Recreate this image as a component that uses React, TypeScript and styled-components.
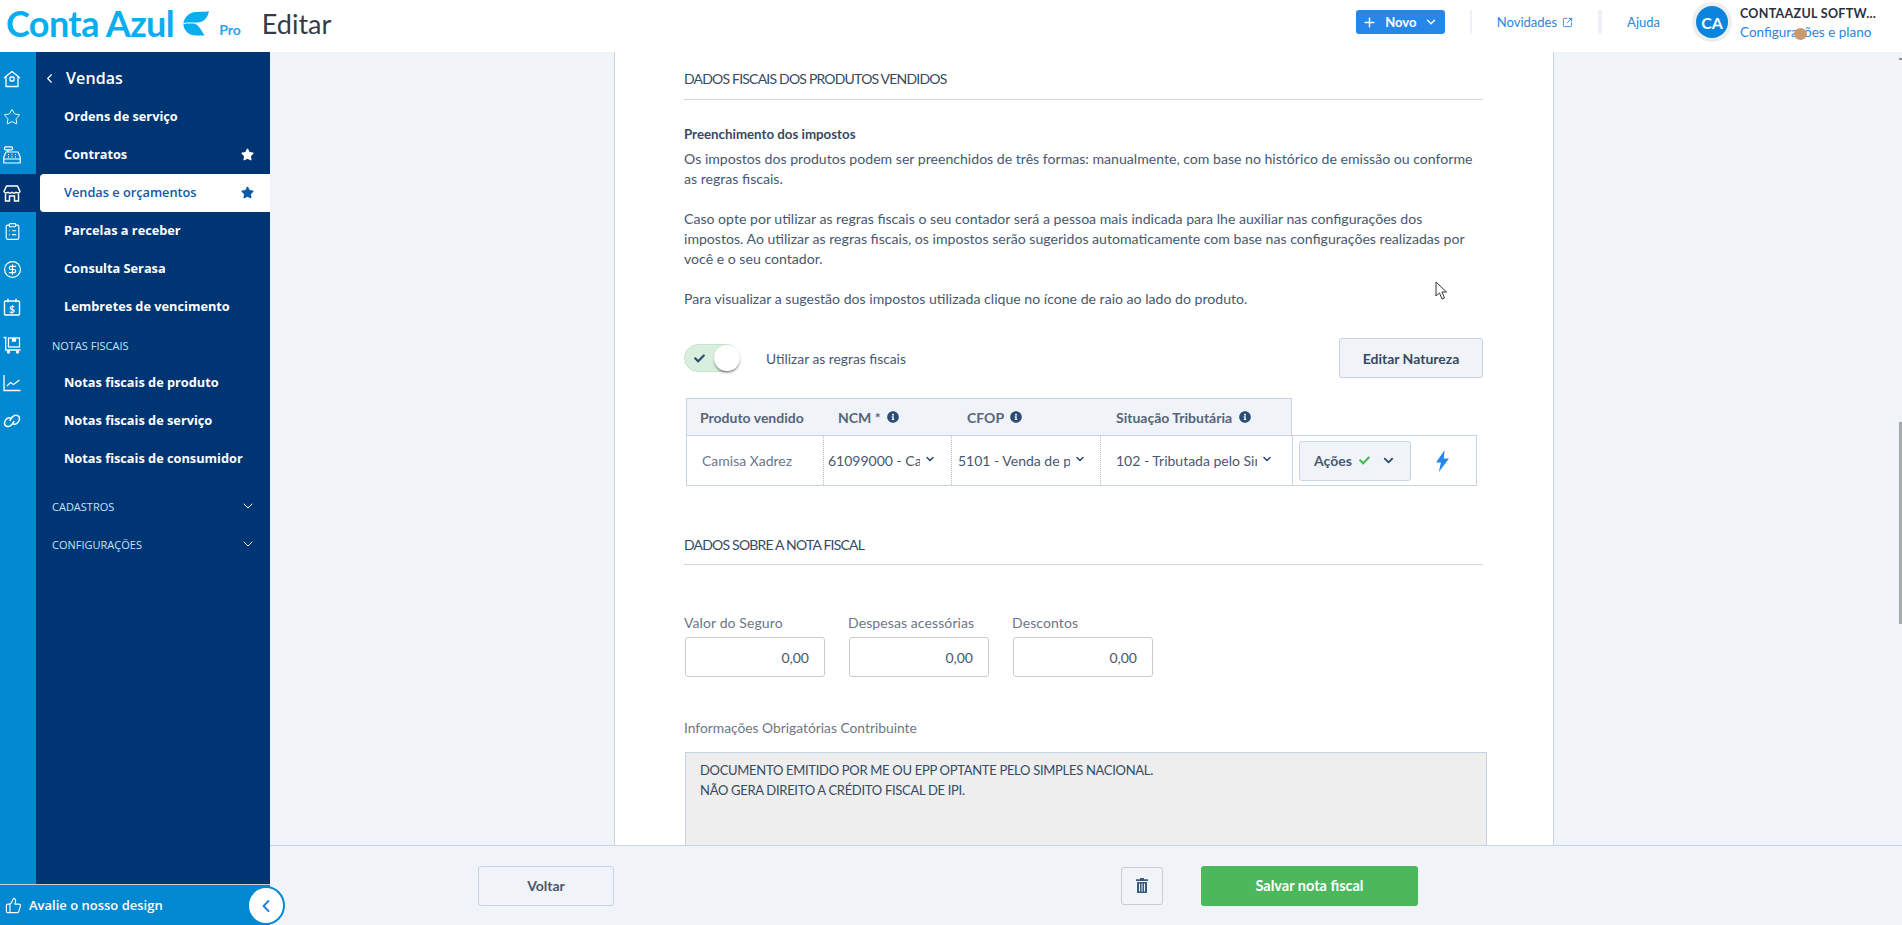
import styled, { createGlobalStyle } from 'styled-components';
import {
  ChevronDown,
  ChevronLeft,
  CircleDollarSign,
  ClipboardList,
  Plus,
  SquareArrowOutUpRight,
  Star,
  ThumbsUp,
} from 'lucide-react';
import { FaCheck, FaInfoCircle, FaStar } from 'react-icons/fa';

const GlobalStyle = createGlobalStyle`
  * {
    box-sizing: border-box;
  }

  html,
  body {
    height: 100%;
    margin: 0;
    overflow: hidden;
    background: #f0f3f8;
    font-family: Lato, "Open Sans", sans-serif;
  }

  p {
    margin: 0;
  }
`;

const HomeIcon = () => (
  <svg width="18" height="18" viewBox="0 0 18 18" fill="none" stroke="currentColor" strokeWidth="1.3">
    <path d="M1 8 9 1.5 17 8M3 6.8V16.5h12V6.8" strokeLinejoin="round" />
    <rect x="7" y="7" width="4" height="4" rx="0.8" />
  </svg>
);

const RegisterIcon = () => (
  <svg width="18" height="18" viewBox="0 0 18 18" fill="none" stroke="currentColor" strokeWidth="1.2">
    <rect x="1.5" y="0.8" width="8" height="3" rx="1" />
    <path d="M5 4v2M3 6h12l2.2 5v6H.8v-6Z" strokeLinejoin="round" />
    <path d="M.8 13h16.4M5 8.5h1M8.5 8.5h1M12 8.5h1M5 10.8h1M8.5 10.8h1M12 10.8h1" />
  </svg>
);

const StoreIcon = () => (
  <svg width="18" height="17" viewBox="0 0 18 17" fill="none" stroke="currentColor" strokeWidth="1.5">
    <path d="M3.5 1h11L17 6.5a2.6 2.6 0 0 1-4 .8 2.8 2.8 0 0 1-4 0 2.8 2.8 0 0 1-4 0 2.6 2.6 0 0 1-4-.8Z" strokeLinejoin="round" />
    <path d="M2.5 8.5V16h4v-5h5v5h4V8.5" />
  </svg>
);

const CalendarMoneyIcon = () => (
  <svg width="18" height="18" viewBox="0 0 18 18" fill="none" stroke="currentColor" strokeWidth="1.4">
    <rect x="1.5" y="3" width="15" height="14" rx="1" />
    <path d="M5 .8v3.5M13 .8v3.5" />
    <text x="9" y="14.6" fill="currentColor" stroke="none" fontSize="10" fontWeight="700" textAnchor="middle" fontFamily="Lato, sans-serif">$</text>
  </svg>
);

const CartBoxIcon = () => (
  <svg width="18" height="18" viewBox="0 0 18 18" fill="none" stroke="currentColor" strokeWidth="1.3">
    <path d="M.5 1.5h2.2V14H17.5" />
    <rect x="5.5" y="2" width="11" height="9" />
    <path d="M9.5 2v3h3V2" fill="currentColor" />
    <circle cx="5.5" cy="16" r="1" />
    <circle cx="14.5" cy="16" r="1" />
  </svg>
);

const ChartIcon = () => (
  <svg width="18" height="18" viewBox="0 0 18 18" fill="none" stroke="currentColor" strokeWidth="1.3">
    <path d="M1 1v15.5h16.5" />
    <path d="M4 12l3.500-3.500 3 2L16.500 6" />
  </svg>
);

const LinkIcon = () => (
  <svg width="18" height="14" viewBox="0 0 18 14" fill="none" stroke="currentColor" strokeWidth="1.5">
    <path d="M8 4.200C5.500 3 2.800 5 1.800 7.500.8 10.500 2.500 13 5.500 12.500c2.500-.4 5-3.200 5.500-5.500" />
    <path d="M7 7c.5-2.500 3-5.300 5.500-5.700 3-.4 4.700 2 3.700 5C15 9 12.500 11 10 9.800" />
  </svg>
);

const LogoLeaf = () => (
  <svg width="26" height="25" viewBox="0 0 26 25" fill="#09aeef">
    <path d="M26 .5C24.500 7 21 11 15 11.500H4.500C2.500 11.500 1.200 11.800.3 12.500 1 7 5.500 1.500 12 1Z" />
    <path d="M.3 13.500c1-.8 2.200-1 4-1h6.200c3.500 0 6.500 4 11 12H13C6 24.500 1 20 .3 13.500Z" />
  </svg>
);

const TrashIcon = () => (
  <svg width="12" height="15" viewBox="0 0 12 15" fill="#35597f">
    <path d="M4 0h4v1.300h4v1.700H0V1.300h4ZM1 4h10v11H1ZM3 5.500V13.500h1V5.500ZM5.500 5.500V13.500h1V5.500ZM8 5.500V13.500h1V5.500Z" fillRule="evenodd" />
  </svg>
);

const BoltIcon = () => (
  <svg width="15" height="22" viewBox="0 0 14 21" fill="#2687e9">
    <path d="M9 0 .8 12h4.700L3.500 21 13.200 8.200H8.200Z" />
  </svg>
);

const railIcons = [
  <HomeIcon key="home" />,
  <Star key="star" size={18} strokeWidth={1.3} />,
  <RegisterIcon key="register" />,
  <StoreIcon key="store" />,
  <ClipboardList key="clipboard" size={19} strokeWidth={1.4} />,
  <CircleDollarSign key="dollar" size={19} strokeWidth={1.5} />,
  <CalendarMoneyIcon key="calendar" />,
  <CartBoxIcon key="cart" />,
  <ChartIcon key="chart" />,
  <LinkIcon key="link" />,
];

const App = () => {
  return (
    <>
      <GlobalStyle />
      <Page>
        <Header>
          <Brand>
            <LogoText>Conta Azul</LogoText>
            <LogoLeaf />
            <ProTag>Pro</ProTag>
            <PageTitle>Editar</PageTitle>
          </Brand>
          <HeaderActions>
            <NewButton>
              <Plus size={15} strokeWidth={2.2} />
              Novo
              <ChevronDown size={14} strokeWidth={2.4} />
            </NewButton>
            <HeaderLink $left={25} $right={25} $divided>
              Novidades
              <SquareArrowOutUpRight size={11} strokeWidth={2} />
            </HeaderLink>
            <HeaderLink $left={25} $right={32} $divided={false}>
              Ajuda
            </HeaderLink>
            <AvatarRing>
              <Avatar>CA</Avatar>
            </AvatarRing>
            <Account>
              <AccountName>CONTAAZUL SOFTW...</AccountName>
              <AccountLink>Configurações e plano</AccountLink>
            </Account>
          </HeaderActions>
        </Header>

        <Body>
          <SideColumn>
            <SideTop>
              <Rail>
                {railIcons.map((icon, index) => (
                  <RailItem key={index} $active={index === 3}>
                    {icon}
                  </RailItem>
                ))}
              </Rail>
              <SideMenu>
                <MenuTitle>
                  <ChevronLeft size={15} strokeWidth={1.8} />
                  Vendas
                </MenuTitle>
                <MenuItem>Ordens de serviço</MenuItem>
                <MenuItem>
                  Contratos
                  <FaStar size={13} />
                </MenuItem>
                <MenuItem $active>
                  Vendas e orçamentos
                  <FaStar size={13} />
                </MenuItem>
                <MenuItem>Parcelas a receber</MenuItem>
                <MenuItem>Consulta Serasa</MenuItem>
                <MenuItem>Lembretes de vencimento</MenuItem>
                <MenuLabel>NOTAS FISCAIS</MenuLabel>
                <MenuItem>Notas fiscais de produto</MenuItem>
                <MenuItem>Notas fiscais de serviço</MenuItem>
                <MenuItem>Notas fiscais de consumidor</MenuItem>
                <MenuGroup $top={9}>
                  CADASTROS
                  <ChevronDown size={16} strokeWidth={1.5} />
                </MenuGroup>
                <MenuGroup $top={0}>
                  CONFIGURAÇÕES
                  <ChevronDown size={16} strokeWidth={1.5} />
                </MenuGroup>
              </SideMenu>
            </SideTop>
            <RateBar>
              <ThumbsUp size={17} strokeWidth={1.6} />
              Avalie o nosso design
              <CollapseButton>
                <ChevronLeft size={20} strokeWidth={2.2} />
              </CollapseButton>
            </RateBar>
          </SideColumn>

          <Main>
            <ScrollArea>
              <Card>
                <SectionTitle $top={17}>DADOS FISCAIS DOS PRODUTOS VENDIDOS</SectionTitle>
                <IntroHeading>Preenchimento dos impostos</IntroHeading>
                <Paragraph>
                  Os impostos dos produtos podem ser preenchidos de três formas: manualmente, com base no histórico de
                  emissão ou conforme as regras fiscais.
                </Paragraph>
                <Paragraph>
                  Caso opte por utilizar as regras fiscais o seu contador será a pessoa mais indicada para lhe auxiliar
                  nas configurações dos impostos. Ao utilizar as regras fiscais, os impostos serão sugeridos
                  automaticamente com base nas configurações realizadas por você e o seu contador.
                </Paragraph>
                <Paragraph>Para visualizar a sugestão dos impostos utilizada clique no ícone de raio ao lado do produto.</Paragraph>

                <RulesRow>
                  <Toggle>
                    <FaCheck size={11} />
                    <ToggleKnob />
                  </Toggle>
                  <ToggleLabel>Utilizar as regras fiscais</ToggleLabel>
                  <SecondaryButton>Editar Natureza</SecondaryButton>
                </RulesRow>

                <TaxTable>
                  <TaxHead>
                    <HeadCell $width={137} $pad={13}>Produto vendido</HeadCell>
                    <HeadCell $width={128} $pad={14}>
                      NCM * <FaInfoCircle size={12} />
                    </HeadCell>
                    <HeadCell $width={149} $pad={15}>
                      CFOP <FaInfoCircle size={12} />
                    </HeadCell>
                    <HeadCell $width={191} $pad={15}>
                      Situação Tributária <FaInfoCircle size={12} />
                    </HeadCell>
                  </TaxHead>
                  <TaxRow>
                    <ProductCell>Camisa Xadrez</ProductCell>
                    <SelectCell $width={128} $pad={4}>
                      <SelectText $width={92}>61099000 - Camisa</SelectText>
                      <ChevronDown size={12} strokeWidth={3.2} />
                    </SelectCell>
                    <SelectCell $width={149} $pad={6}>
                      <SelectText $width={112}>5101 - Venda de produção</SelectText>
                      <ChevronDown size={12} strokeWidth={3.2} />
                    </SelectCell>
                    <SelectCell $width={192} $pad={15}>
                      <SelectText $width={141}>102 - Tributada pelo Simples</SelectText>
                      <ChevronDown size={12} strokeWidth={3.2} />
                    </SelectCell>
                    <ActionCell>
                      <ActionButton>
                        Ações
                        <FaCheck size={11} color="#4bb85c" />
                        <ChevronDown size={15} strokeWidth={3} />
                      </ActionButton>
                      <BoltIcon />
                    </ActionCell>
                  </TaxRow>
                </TaxTable>

                <SectionTitle $top={49}>DADOS SOBRE A NOTA FISCAL</SectionTitle>

                <FieldRow>
                  <Field>
                    <FieldLabel>Valor do Seguro</FieldLabel>
                    <MoneyInput>0,00</MoneyInput>
                  </Field>
                  <Field>
                    <FieldLabel>Despesas acessórias</FieldLabel>
                    <MoneyInput>0,00</MoneyInput>
                  </Field>
                  <Field>
                    <FieldLabel>Descontos</FieldLabel>
                    <MoneyInput>0,00</MoneyInput>
                  </Field>
                </FieldRow>

                <NotesLabel>Informações Obrigatórias Contribuinte</NotesLabel>
                <NotesBox>
                  DOCUMENTO EMITIDO POR ME OU EPP OPTANTE PELO SIMPLES NACIONAL.
                  <br />
                  NÃO GERA DIREITO A CRÉDITO FISCAL DE IPI.
                </NotesBox>
              </Card>
              <ScrollTick />
              <ScrollThumb />
            </ScrollArea>
            <Footer>
              <BackButton>Voltar</BackButton>
              <TrashButton>
                <TrashIcon />
              </TrashButton>
              <SaveButton>Salvar nota fiscal</SaveButton>
            </Footer>
          </Main>
        </Body>

        <PointerDot />
        <MouseCursor viewBox="0 0 12 19" width="12" height="19">
          <path d="M1 1v14l3.500-3 2.500 6 2.500-1-2.500-6h4.500Z" fill="#fff" stroke="#333" strokeWidth="1" />
        </MouseCursor>
      </Page>
    </>
  );
};

const Page = styled.div`
  position: relative;
  display: flex;
  flex-direction: column;
  height: 100vh;
  overflow: hidden;
`;

const Header = styled.header`
  display: flex;
  align-items: center;
  justify-content: space-between;
  flex: 0 0 52px;
  padding: 0 22px 8px 6px;
  background: #fff;
`;

const Brand = styled.div`
  display: flex;
  align-items: center;
  padding-top: 2px;
`;

const LogoText = styled.span`
  margin-right: 9px;
  color: #09aeef;
  font-size: 36px;
  font-weight: 700;
  letter-spacing: -0.6px;
  line-height: 40px;
`;

const ProTag = styled.span`
  align-self: flex-end;
  margin: 0 21px 0 10px;
  padding-bottom: 5px;
  color: #2aa5e8;
  font-size: 14px;
  font-weight: 700;
`;

const PageTitle = styled.h1`
  margin: 0;
  color: #343a4a;
  font-size: 27px;
  font-weight: 400;
`;

const HeaderActions = styled.div`
  display: flex;
  align-items: center;
`;

const NewButton = styled.button`
  display: flex;
  align-items: center;
  justify-content: center;
  gap: 8px;
  width: 89px;
  height: 24px;
  margin-right: 25px;
  padding: 0;
  border: 0;
  border-radius: 3px;
  background: #2687e9;
  color: #fff;
  font-family: inherit;
  font-size: 13px;
  font-weight: 700;
`;

const HeaderLink = styled.a<{ $left: number; $right: number; $divided: boolean }>`
  display: flex;
  align-items: center;
  gap: 5px;
  height: 24px;
  padding: 0 ${({ $right }) => $right}px 0 ${({ $left }) => $left}px;
  border-left: 2px solid #eef1f6;
  border-right: ${({ $divided }) => ($divided ? '2px solid #eef1f6' : '0')};
  color: #2687e9;
  font-size: 13px;
`;

const AvatarRing = styled.div`
  display: flex;
  align-items: center;
  justify-content: center;
  width: 40px;
  height: 40px;
  margin-right: 8px;
  border-radius: 50%;
  background: #eee;
`;

const Avatar = styled.div`
  display: flex;
  align-items: center;
  justify-content: center;
  width: 32px;
  height: 32px;
  border-radius: 50%;
  background: #0a84dc;
  color: #fff;
  font-size: 16px;
  font-weight: 700;
`;

const Account = styled.div`
  display: flex;
  flex-direction: column;
  gap: 3px;
  width: 140px;
  margin-top: 2px;
`;

const AccountName = styled.span`
  color: #2b3040;
  font-size: 12.5px;
  font-weight: 700;
  letter-spacing: 0.3px;
  white-space: nowrap;
`;

const AccountLink = styled.span`
  color: #2687e9;
  font-size: 13.5px;
  white-space: nowrap;
`;

const Body = styled.div`
  display: flex;
  flex: 1;
  min-height: 0;
`;

const SideColumn = styled.aside`
  display: flex;
  flex-direction: column;
  flex: 0 0 270px;
`;

const SideTop = styled.div`
  display: flex;
  flex: 1;
  min-height: 0;
  background: #003574;
`;

const Rail = styled.nav`
  flex: 0 0 36px;
  padding-top: 8px;
  background: #0088d1;
`;

const RailItem = styled.div<{ $active?: boolean }>`
  display: flex;
  align-items: center;
  height: 38px;
  padding-left: 3px;
  background: ${({ $active }) => ($active ? '#003574' : 'transparent')};
  color: #fff;
`;

const SideMenu = styled.div`
  flex: 1;
  padding: 8px 0 0 4px;
  color: #fff;
  font-family: "Open Sans", sans-serif;
`;

const MenuTitle = styled.div`
  display: flex;
  align-items: center;
  gap: 9px;
  height: 38px;
  padding: 0 0 2px 2px;
  font-size: 16px;
  font-weight: 600;
  letter-spacing: 0.1px;
`;

const MenuItem = styled.div<{ $active?: boolean }>`
  display: flex;
  align-items: center;
  justify-content: space-between;
  height: 38px;
  padding: 0 16px 2px 24px;
  border-radius: 4px 0 0 4px;
  background: ${({ $active }) => ($active ? '#fff' : 'transparent')};
  color: ${({ $active }) => ($active ? '#0a5bab' : '#fff')};
  font-size: 12.75px;
  font-weight: ${({ $active }) => ($active ? 600 : 700)};
`;

const MenuLabel = styled.div`
  display: flex;
  align-items: center;
  height: 38px;
  padding-left: 12px;
  color: #c4e3fa;
  font-size: 11px;
  font-weight: 400;
`;

const MenuGroup = styled(MenuLabel)<{ $top: number }>`
  justify-content: space-between;
  margin-top: ${({ $top }) => $top}px;
  padding-right: 14px;

  svg {
    color: #fff;
  }
`;

const RateBar = styled.div`
  position: relative;
  display: flex;
  align-items: center;
  gap: 7px;
  flex: 0 0 41px;
  padding-left: 5px;
  border-top: 1px solid #c8ccd2;
  background: #0088d1;
  color: #fff;
  font-family: "Open Sans", sans-serif;
  font-size: 13px;
  font-weight: 600;
`;

const CollapseButton = styled.div`
  position: absolute;
  top: 1px;
  right: -15px;
  display: flex;
  align-items: center;
  justify-content: center;
  width: 38px;
  height: 39px;
  border: 2px solid #0088d1;
  border-radius: 50%;
  background: #fff;
  color: #1a7fd6;
`;

const Main = styled.main`
  display: flex;
  flex-direction: column;
  flex: 1;
  min-width: 0;
`;

const ScrollArea = styled.div`
  position: relative;
  flex: 1;
  min-height: 0;
  overflow: hidden;
  padding-left: 344px;
`;

const ScrollTick = styled.div`
  position: absolute;
  top: 6px;
  right: 0;
  width: 3px;
  height: 2px;
  background: #8d9397;
`;

const ScrollThumb = styled.div`
  position: absolute;
  top: 370px;
  right: 0;
  width: 3px;
  height: 202px;
  background: #a4aaaa;
`;

const Card = styled.section`
  display: flow-root;
  width: 940px;
  min-height: 900px;
  padding: 0 70px 0 69px;
  border-left: 1px solid #c9d4e3;
  border-right: 1px solid #c9d4e3;
  background: #fff;
`;

const SectionTitle = styled.h2<{ $top: number }>`
  margin: ${({ $top }) => $top}px 0 0;
  padding: 0 0 ${({ $top }) => ($top === 17 ? 10 : 9)}px;
  border-bottom: 1px solid #cfd6e2;
  color: #364a63;
  font-size: 14px;
  font-weight: 400;
  letter-spacing: -0.8px;
  line-height: 20px;
`;

const IntroHeading = styled.h3`
  margin: 24px 0 5px;
  color: #364a63;
  font-size: 13.3px;
  font-weight: 700;
  line-height: 20px;
`;

const Paragraph = styled.p`
  margin-bottom: 20px;
  color: #47586f;
  font-size: 14.1px;
  line-height: 20px;
`;

const RulesRow = styled.div`
  display: flex;
  align-items: center;
  margin-top: 29px;
`;

const Toggle = styled.div`
  position: relative;
  display: flex;
  align-items: center;
  width: 56px;
  height: 28px;
  padding-left: 9px;
  border: 1px solid #c5e4cb;
  border-radius: 14px;
  background: #d9efde;
  color: #2c4c74;
`;

const ToggleKnob = styled.span`
  position: absolute;
  top: 0;
  right: -1px;
  width: 26px;
  height: 26px;
  border-radius: 50%;
  background: #fff;
  box-shadow: 0 2px 2px rgba(0, 0, 0, 0.35);
`;

const ToggleLabel = styled.span`
  flex: 1;
  margin-left: 26px;
  color: #47586f;
  font-size: 13.8px;
`;

const SecondaryButton = styled.button`
  width: 144px;
  height: 40px;
  border: 1px solid #c9d4e3;
  border-radius: 3px;
  background: #f0f3f8;
  color: #364a63;
  font-family: inherit;
  font-size: 14px;
  font-weight: 700;
`;

const TaxTable = styled.div`
  margin: 20px 0 0 2px;
`;

const TaxHead = styled.div`
  display: flex;
  width: 606px;
  height: 37px;
  border: 1px solid #c9d4e3;
  border-bottom: 0;
  background: #f0f3f8;
`;

const HeadCell = styled.div<{ $width: number; $pad: number }>`
  display: flex;
  align-items: center;
  gap: 3px;
  flex: 0 0 ${({ $width }) => $width}px;
  padding-left: ${({ $pad }) => $pad}px;
  color: #56657a;
  font-size: 14px;
  font-weight: 700;
  white-space: pre;

  svg {
    color: #2c4c74;
  }
`;

const TaxRow = styled.div`
  display: flex;
  width: 791px;
  height: 51px;
  border: 1px solid #c9d4e3;
`;

const ProductCell = styled.div`
  display: flex;
  align-items: center;
  flex: 0 0 136px;
  padding-left: 15px;
  color: #6d7685;
  font-size: 14px;
`;

const SelectCell = styled.div<{ $width: number; $pad: number }>`
  display: flex;
  align-items: center;
  gap: 4px;
  flex: 0 0 ${({ $width }) => $width}px;
  padding-left: ${({ $pad }) => $pad}px;
  border-left: 1px dotted #b8bdc6;
  color: #47586f;
  font-size: 14px;

  svg {
    flex: none;
    margin-top: -3px;
    color: #2c4c74;
  }
`;

const SelectText = styled.span<{ $width: number }>`
  flex: 0 0 ${({ $width }) => $width}px;
  overflow: hidden;
  white-space: nowrap;
`;

const ActionCell = styled.div`
  display: flex;
  align-items: center;
  gap: 24px;
  flex: 1;
  padding-left: 6px;
  border-left: 1px solid #c9d4e3;
`;

const ActionButton = styled.button`
  display: flex;
  align-items: center;
  justify-content: center;
  gap: 7px;
  width: 112px;
  height: 40px;
  padding: 0;
  border: 1px solid #c9d4e3;
  border-radius: 3px;
  background: #f0f3f8;
  color: #47586f;
  font-family: inherit;
  font-size: 14px;
  font-weight: 700;

  svg:last-child {
    margin-left: 4px;
    color: #2c4c74;
  }
`;

const FieldRow = styled.div`
  display: flex;
  gap: 24px;
  margin: 48px 0 0 1px;
`;

const Field = styled.div`
  display: flex;
  flex-direction: column;
  gap: 4px;
  width: 140px;
`;

const FieldLabel = styled.label`
  margin-left: -1px;
  color: #6d7685;
  font-size: 14px;
  letter-spacing: 0.1px;
  line-height: 20px;
  white-space: nowrap;
`;

const MoneyInput = styled.div`
  height: 40px;
  padding-right: 15px;
  border: 1px solid #c8ccd2;
  border-radius: 3px;
  color: #47586f;
  font-size: 14px;
  line-height: 40px;
  text-align: right;
`;

const NotesLabel = styled.div`
  margin-top: 41px;
  color: #6d7685;
  font-size: 13.8px;
  line-height: 20px;
`;

const NotesBox = styled.div`
  width: 802px;
  height: 160px;
  margin: 14px 0 0 1px;
  padding: 7px 14px;
  border: 1px solid #c9d4e3;
  background: #eee;
  color: #364a63;
  font-size: 13px;
  letter-spacing: -0.3px;
  line-height: 20px;
`;

const Footer = styled.footer`
  display: flex;
  align-items: center;
  flex: 0 0 80px;
  padding: 0 0 0 208px;
  border-top: 1px solid #c9d4e3;
  background: #f0f3f8;
`;

const BackButton = styled.button`
  width: 136px;
  height: 40px;
  border: 1px solid #c9d4e3;
  border-radius: 3px;
  background: transparent;
  color: #47586f;
  font-family: inherit;
  font-size: 14px;
  font-weight: 700;
`;

const TrashButton = styled.button`
  display: flex;
  align-items: center;
  justify-content: center;
  width: 42px;
  height: 38px;
  margin: 0 38px 0 507px;
  border: 1px solid #c8ccd2;
  border-radius: 3px;
  background: transparent;
`;

const SaveButton = styled.button`
  width: 217px;
  height: 40px;
  border: 0;
  border-radius: 3px;
  background: #4bb85c;
  color: #fff;
  font-family: inherit;
  font-size: 14.5px;
  font-weight: 700;
`;

const PointerDot = styled.span`
  position: absolute;
  top: 28px;
  left: 1794px;
  width: 13px;
  height: 12px;
  border-radius: 50%;
  background: #c99a70;
`;

const MouseCursor = styled.svg`
  position: absolute;
  top: 281px;
  left: 1435px;
`;

export default App;
